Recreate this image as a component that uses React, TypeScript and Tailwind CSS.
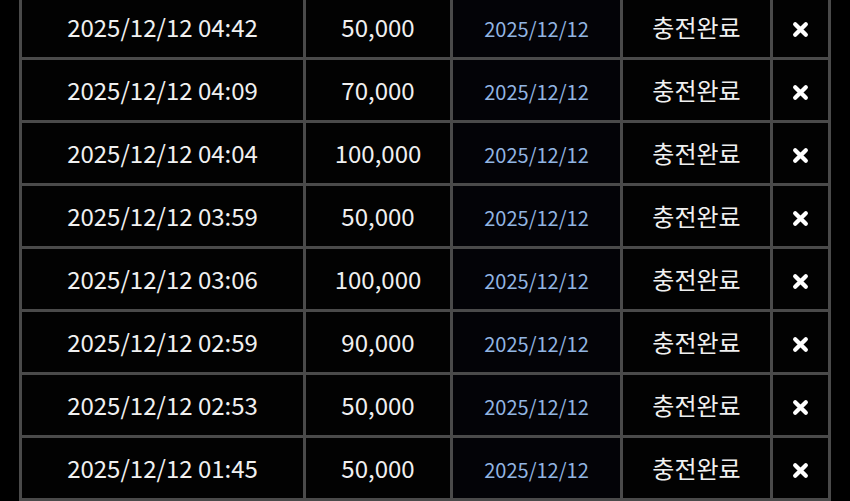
import React from "react";

type Row = { time: string; amount: string; date: string; status: string };

const rows: Row[] = [
  { time: "2025/12/12 04:42", amount: "50,000", date: "2025/12/12", status: "충전완료" },
  { time: "2025/12/12 04:09", amount: "70,000", date: "2025/12/12", status: "충전완료" },
  { time: "2025/12/12 04:04", amount: "100,000", date: "2025/12/12", status: "충전완료" },
  { time: "2025/12/12 03:59", amount: "50,000", date: "2025/12/12", status: "충전완료" },
  { time: "2025/12/12 03:06", amount: "100,000", date: "2025/12/12", status: "충전완료" },
  { time: "2025/12/12 02:59", amount: "90,000", date: "2025/12/12", status: "충전완료" },
  { time: "2025/12/12 02:53", amount: "50,000", date: "2025/12/12", status: "충전완료" },
  { time: "2025/12/12 01:45", amount: "50,000", date: "2025/12/12", status: "충전완료" },
];

function CloseIcon() {
  return (
    <svg width="17" height="17" viewBox="0 0 16 16" fill="none">
      <path
        d="M3 3L13 13M13 3L3 13"
        stroke="#ffffff"
        strokeWidth="4"
        strokeLinecap="round"
      />
    </svg>
  );
}

export default function App() {
  return (
    <div
      className="w-[850px] h-[501px] overflow-hidden bg-black"
      style={{ fontFamily: '"Noto Sans CJK KR", "Noto Sans", sans-serif' }}
    >
      <div className="ml-[19px] -mt-[6px] w-fit bg-[#4a4a4a] p-[3px]">
        <div className="grid grid-cols-[281px_144px_167px_147px_55px] auto-rows-[60px] gap-[3px]">
          {rows.map((r, i) => (
            <React.Fragment key={i}>
              <div className="flex items-center justify-center bg-[#020202] text-[24px] text-[#f0f0f0]">
                {r.time}
              </div>
              <div className="flex items-center justify-center bg-[#020202] text-[24px] text-[#f0f0f0]">
                {r.amount}
              </div>
              <div className="flex items-center justify-center bg-[#030307] pt-[4px] text-[20px] text-[#92b5e2]">
                {r.date}
              </div>
              <div className="flex items-center justify-center bg-[#020202] text-[24px] text-[#f0f0f0]">
                {r.status}
              </div>
              <div className="flex items-center justify-center bg-[#020202] pt-[4px]">
                <CloseIcon />
              </div>
            </React.Fragment>
          ))}
        </div>
      </div>
    </div>
  );
}
